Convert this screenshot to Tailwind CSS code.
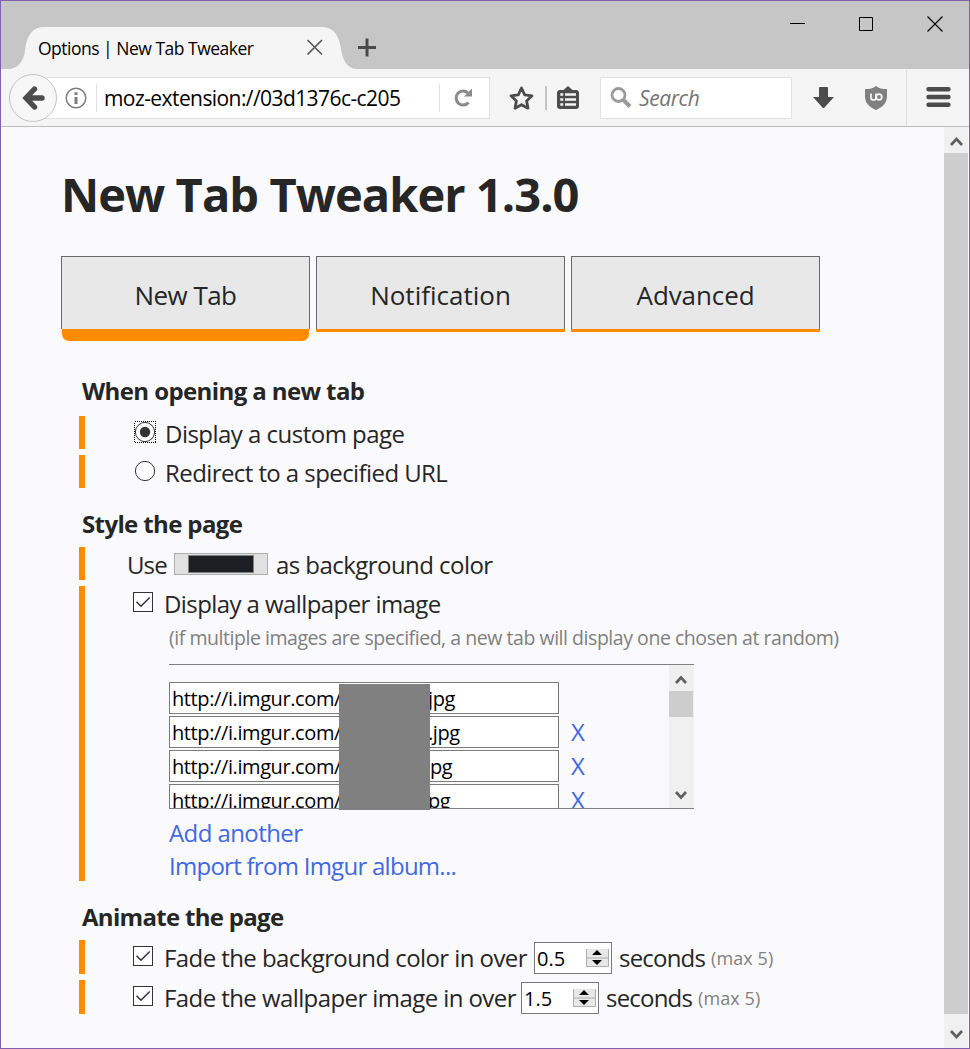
<!DOCTYPE html>
<html lang="en">
<head>
<meta charset="utf-8">
<title>Options | New Tab Tweaker</title>
<script src="https://cdn.jsdelivr.net/npm/@tailwindcss/browser@4"></script>
</head>
<body class="h-[1049px] w-[970px] overflow-hidden font-['Open_Sans','Noto_Sans',sans-serif] text-[#262626]">
<div class="flex h-[1049px] w-[970px] flex-col whitespace-nowrap border border-[#8160b0] bg-[#fafafc]">

  <!-- title bar -->
  <header class="relative flex h-[68px] shrink-0 bg-[#c6c6c6]">
    <svg class="absolute left-0 top-0" width="360" height="68" viewBox="1 1 360 68"><path d="M1 69H8C18 69 24 61 25 50C27 35 32 27 45 27H321C334 27 339 35 341 49C343 61 347 69 358 69Z" fill="#f5f5f5"/></svg>
    <div class="relative mt-[26px] flex h-[42px] w-[342px] items-center pl-[37px] pt-px">
      <span class="text-[17.5px] tracking-[-0.5px] text-black">Options | New Tab Tweaker</span>
    </div>
    <svg class="absolute left-[300px] top-[32px]" width="80" height="30" viewBox="301 33 80 30" fill="none"><path d="M307.500 40L322 54.500M322 40L307.500 54.500" stroke="#5a5a5a" stroke-width="1.700"/><path d="M358 47.500H376M367 38.500V56.500" stroke="#4a4a4a" stroke-width="3"/></svg>
    <svg class="absolute left-[780px] top-[9px]" width="170" height="30" viewBox="781 10 170 30" fill="none" stroke="#000"><path d="M790 23.500H805"/><path d="M859.500 17.500H872.500V30.500H859.500Z"/><path d="M927.500 16.500L942.500 31.500M942.500 16.500L927.500 31.500" stroke-width="1.200"/></svg>
  </header>

  <!-- navigation toolbar -->
  <nav class="relative flex h-[58px] shrink-0 items-center border-b border-[#bdbdbd] bg-[#f5f5f5]">
    <div class="ml-[31px] flex h-[42px] w-[458px] items-center border border-[#e2e2e2] bg-white">
      <div class="ml-[63px] h-7 w-px bg-[#e0e0e0]"></div>
      <span class="ml-[7px] mt-[2px] w-[335px] text-[21px] tracking-[-0.58px] text-black">moz-extension://03d1376c-c205</span>
      <div class="h-7 w-px bg-[#e0e0e0]"></div>
    </div>
    <div class="ml-[55px] h-6 w-[2px] bg-[#c4c4c4]"></div>
    <div class="ml-[53px] flex h-[42px] w-[192px] items-center border border-[#e2e2e2] bg-white pl-[38px]">
      <span class="mt-[2px] text-[21px] italic tracking-[-0.4px] text-[#757575]">Search</span>
    </div>
    <div class="ml-[114px] h-[56px] w-px bg-[#dedede]"></div>
    <svg class="absolute left-0 top-0" width="968" height="57" viewBox="1 69 968 57" fill="none">
      <circle cx="33" cy="98" r="23.500" fill="#f7f7f7" stroke="#c4c4c4"/>
      <path d="M42 98H28" stroke="#4c4c4c" stroke-width="5.400" stroke-linecap="round"/><path d="M34.500 89L26 98L34.500 107" stroke="#4c4c4c" stroke-width="5.400" stroke-linecap="round"/>
      <circle cx="76" cy="98" r="9.800" stroke="#7d7d7d" stroke-width="1.500"/>
      <path d="M76 92.200V95M76 97V104" stroke="#7d7d7d" stroke-width="3"/>
      <path d="M468.500 102.500A7 7 0 1 1 468 93" stroke="#8a8a8a" stroke-width="3"/><path d="M472 88.500V96.500H464Z" fill="#8a8a8a"/>
      <path d="M521.500 88L524.700 94.900L532 95.800L526.600 100.900L528 108.200L521.500 104.700L515 108.200L516.400 100.900L511 95.800L518.300 94.900Z" stroke="#4c4c4c" stroke-width="2.800" stroke-linejoin="round"/>
      <path d="M560 90H563.500L568 86L572.500 90H576Q579 90 579 93V106Q579 109 576 109H560Q557 109 557 106V93Q557 90 560 90Z" fill="#4c4c4c"/>
      <path d="M560.300 94.500H563.200M565 94.500H576M560.300 99.500H563.200M565 99.500H576M560.300 104.500H563.200M565 104.500H576" stroke="#f5f5f5" stroke-width="2.600"/>
      <circle cx="618.500" cy="95" r="6.500" stroke="#9a9a9a" stroke-width="2.800"/><path d="M623 99.500L630 106.500" stroke="#9a9a9a" stroke-width="4"/>
      <path d="M820 87H827Q828 87 828 88V97H834L824.500 107.500Q823.500 108.500 822.500 107.500L813 97H819V88Q819 87 820 87Z" fill="#4c4c4c"/>
      <path d="M876 86C879 88.500 882 89 887 89V96C887 103 883 107 876 110C869 107 865 103 865 96V89C870 89 873 88.500 876 86Z" fill="#808080"/>
      <path d="M871 93.500V97.500Q871 100 873.500 100Q876 100 876 97.500V93.500" stroke="#f5f5f5" stroke-width="1.700"/><circle cx="879" cy="97" r="2.800" stroke="#f5f5f5" stroke-width="1.700"/>
      <path d="M928.500 89.200H948.500M928.500 97H948.500M928.500 104.700H948.500" stroke="#4c4c4c" stroke-width="4.400" stroke-linecap="round"/>
    </svg>
  </nav>

  <div class="flex min-h-0 flex-1">
    <main class="h-full w-[943px] pl-[60px] pt-[33px]">
      <h1 class="flex h-[68px] items-center text-[47px] font-bold tracking-[-0.95px]">New Tab Tweaker 1.3.0</h1>

      <div class="mt-[28px] flex h-[85px] gap-[6px] text-[26px]">
        <div class="w-[249px]">
          <div class="flex h-[73px] items-center justify-center border border-b-0 border-[#696969] bg-[#e8e8e8] pt-1 tracking-[-0.55px]">New Tab</div>
          <div class="mx-px h-[12px] rounded-b-[7px] bg-[#ff8c00]"></div>
        </div>
        <div class="h-[76px] w-[249px]">
          <div class="flex h-[73px] items-center justify-center border border-b-0 border-[#696969] bg-[#e8e8e8] pt-1">Notification</div>
          <div class="h-[3px] bg-[#ff8c00]"></div>
        </div>
        <div class="h-[76px] w-[249px]">
          <div class="flex h-[73px] items-center justify-center border border-b-0 border-[#696969] bg-[#e8e8e8] pt-1 tracking-[-0.1px]">Advanced</div>
          <div class="h-[3px] bg-[#ff8c00]"></div>
        </div>
      </div>

      <div class="pl-[18px] text-[24px] leading-[33px] tracking-[-0.58px]">
        <h2 class="mt-[33px] flex h-[42px] pl-[3px] font-bold tracking-[-0.6px]">When opening a new tab</h2>
        <div class="flex h-[33px] border-l-6 border-[#ff8c00]">
          <svg class="ml-[48px] mt-[4px]" width="24" height="24" viewBox="0 0 24 24" fill="none"><rect x="1.500" y="1.500" width="21" height="21" stroke="#000" stroke-dasharray="1 1" shape-rendering="crispEdges"/><circle cx="12" cy="12" r="9.600" fill="#fff" stroke="#333"/><circle cx="12" cy="12" r="5.200" fill="#333"/></svg>
          <span class="ml-[8px] mt-px tracking-[-0.52px]">Display a custom page</span>
        </div>
        <div class="mt-[6px] flex h-[33px] border-l-6 border-[#ff8c00]">
          <svg class="ml-[48px] mt-[4px]" width="24" height="24" viewBox="0 0 24 24" fill="none"><circle cx="12" cy="12" r="9.600" fill="#fff" stroke="#333"/></svg>
          <span class="ml-[8px] mt-px">Redirect to a specified URL</span>
        </div>

        <h2 class="mt-[19px] flex h-[40px] pl-[3px] font-bold tracking-[-0.63px]">Style the page</h2>
        <div class="flex h-[33px] border-l-6 border-[#ff8c00]">
          <span class="ml-[42px] mt-px w-[47px] tracking-[-0.9px]">Use</span>
          <div class="mt-[6px] flex h-[22px] w-[94px] items-center justify-center border border-[#adadad] bg-[#e1e1e1]"><div class="h-[18px] w-[66px] border border-[#808080] bg-[#1e1f24]"></div></div>
          <span class="ml-[8px] mt-px tracking-[-0.55px]">as background color</span>
        </div>
        <div class="mt-[6px] h-[295px] border-l-6 border-[#ff8c00]">
          <div class="flex h-[33px]">
            <svg class="ml-[48px] mt-[6px]" width="20" height="20" viewBox="0 0 20 20" fill="none"><rect x=".5" y=".5" width="19" height="19" fill="#fff" stroke="#333"/><path d="M3.500 9.800L8 14.300L16.700 5.400" stroke="#333" stroke-width="1.500"/></svg>
            <span class="ml-[11px] mt-px">Display a wallpaper image</span>
          </div>
          <div class="mt-[2px] flex h-[34px] pl-[84px] text-[19.5px] tracking-[-0.46px] text-[#808080]">(if multiple images are specified, a new tab will display one chosen at random)</div>
          <div class="relative ml-[84px] mt-[9px] flex h-[145px] w-[525px] border-y border-[#808080]">
            <div class="flex w-[500px] flex-col gap-[2px] overflow-hidden pt-[17px] text-[20px] tracking-[-0.4px] text-black">
              <div class="flex h-8 shrink-0"><div class="flex h-8 w-[390px] items-center border border-[#7a7a7a] bg-white pl-[2px]"><span class="w-[256px]">http://i.imgur.com/</span><span>jpg</span></div></div>
              <div class="flex h-8 shrink-0"><div class="flex h-8 w-[390px] items-center border border-[#7a7a7a] bg-white pl-[2px]"><span class="w-[256px]">http://i.imgur.com/</span><span>.jpg</span></div><a class="-mt-px ml-[12px] text-[24px] text-[#4169e1]">X</a></div>
              <div class="flex h-8 shrink-0"><div class="flex h-8 w-[390px] items-center border border-[#7a7a7a] bg-white pl-[2px]"><span class="w-[258px]">http://i.imgur.com/</span><span>pg</span></div><a class="-mt-px ml-[12px] text-[24px] text-[#4169e1]">X</a></div>
              <div class="flex h-8 shrink-0"><div class="flex h-8 w-[390px] items-center border border-[#7a7a7a] bg-white pl-[2px]"><span class="w-[256px]">http://i.imgur.com/</span><span>pg</span></div><a class="-mt-px ml-[12px] text-[24px] text-[#4169e1]">X</a></div>
            </div>
            <div class="flex w-[25px] flex-col bg-[#f0f0f0]">
              <svg width="24" height="26" viewBox="0 0 24 26" fill="none"><path d="M7 18L12 12.500L17 18" stroke="#606060" stroke-width="2.700"/></svg>
              <div class="h-[26px] w-[24px] bg-[#cdcdcd]"></div>
              <svg class="mt-auto" width="24" height="26" viewBox="0 0 24 26" fill="none"><path d="M7 10L12 15.500L17 10" stroke="#606060" stroke-width="2.700"/></svg>
            </div>
            <div class="absolute left-[170px] top-[19px] h-[126px] w-[91px] bg-[#808080]"></div>
          </div>
          <div class="mt-[7px] flex h-[33px] pl-[84px] text-[#4169e1]"><a>Add another</a></div>
          <div class="flex h-[33px] pl-[84px] tracking-[-0.73px] text-[#4169e1]"><a>Import from Imgur album...</a></div>
        </div>

        <h2 class="mt-[19px] flex h-[40px] pl-[3px] font-bold tracking-[-0.7px]">Animate the page</h2>
        <div class="flex h-[34px] border-l-6 border-[#ff8c00]">
          <svg class="ml-[48px] mt-[6px]" width="20" height="20" viewBox="0 0 20 20" fill="none"><rect x=".5" y=".5" width="19" height="19" fill="#fff" stroke="#333"/><path d="M3.500 9.800L8 14.300L16.700 5.400" stroke="#333" stroke-width="1.500"/></svg>
          <span class="ml-[11px] mt-px w-[370px]">Fade the background color in over</span>
          <div class="mt-[2px] flex h-[32px] w-[78px] items-center border border-[#7a7a7a] bg-white pl-[2px] text-[20px] tracking-normal text-black"><span class="w-[49px]">0.5</span><svg width="23" height="18" viewBox="0 0 23 18"><path d="M0 0H23V18H0Z" fill="#e8e8e8"/><path d="M.5 0V17.500H22.500V0M0 9H23" fill="none" stroke="#adadad"/><path d="M6 6L11 1L16 6ZM6 11L11 16L16 11Z" fill="#000"/></svg></div>
          <span class="ml-[7px] mt-px w-[92px] tracking-[-0.8px]">seconds</span>
          <span class="mt-[2px] text-[18px] tracking-[0.1px] text-[#808080]">(max 5)</span>
        </div>
        <div class="mt-[6px] flex h-[34px] border-l-6 border-[#ff8c00]">
          <svg class="ml-[48px] mt-[6px]" width="20" height="20" viewBox="0 0 20 20" fill="none"><rect x=".5" y=".5" width="19" height="19" fill="#fff" stroke="#333"/><path d="M3.500 9.800L8 14.300L16.700 5.400" stroke="#333" stroke-width="1.500"/></svg>
          <span class="ml-[11px] mt-px w-[357px]">Fade the wallpaper image in over</span>
          <div class="mt-[2px] flex h-[32px] w-[78px] items-center border border-[#7a7a7a] bg-white pl-[2px] text-[20px] tracking-normal text-black"><span class="w-[49px]">1.5</span><svg width="23" height="18" viewBox="0 0 23 18"><path d="M0 0H23V18H0Z" fill="#e8e8e8"/><path d="M.5 0V17.500H22.500V0M0 9H23" fill="none" stroke="#adadad"/><path d="M6 6L11 1L16 6ZM6 11L11 16L16 11Z" fill="#000"/></svg></div>
          <span class="ml-[7px] mt-px w-[92px] tracking-[-0.8px]">seconds</span>
          <span class="mt-[2px] text-[18px] tracking-[0.1px] text-[#808080]">(max 5)</span>
        </div>
      </div>
    </main>

    <!-- page scrollbar -->
    <div class="flex w-[24px] flex-col bg-[#f0f0f0]">
      <svg width="24" height="26" viewBox="0 0 24 26" fill="none"><path d="M7 18L12.500 12L18 18" stroke="#606060" stroke-width="2.700"/></svg>
      <div class="h-[861px] bg-[#cdcdcd]"></div>
      <svg class="mt-auto" width="24" height="26" viewBox="0 0 24 26" fill="none"><path d="M7 9L12.500 15L18 9" stroke="#606060" stroke-width="2.700"/></svg>
    </div>
  </div>
</div>
</body>
</html>
